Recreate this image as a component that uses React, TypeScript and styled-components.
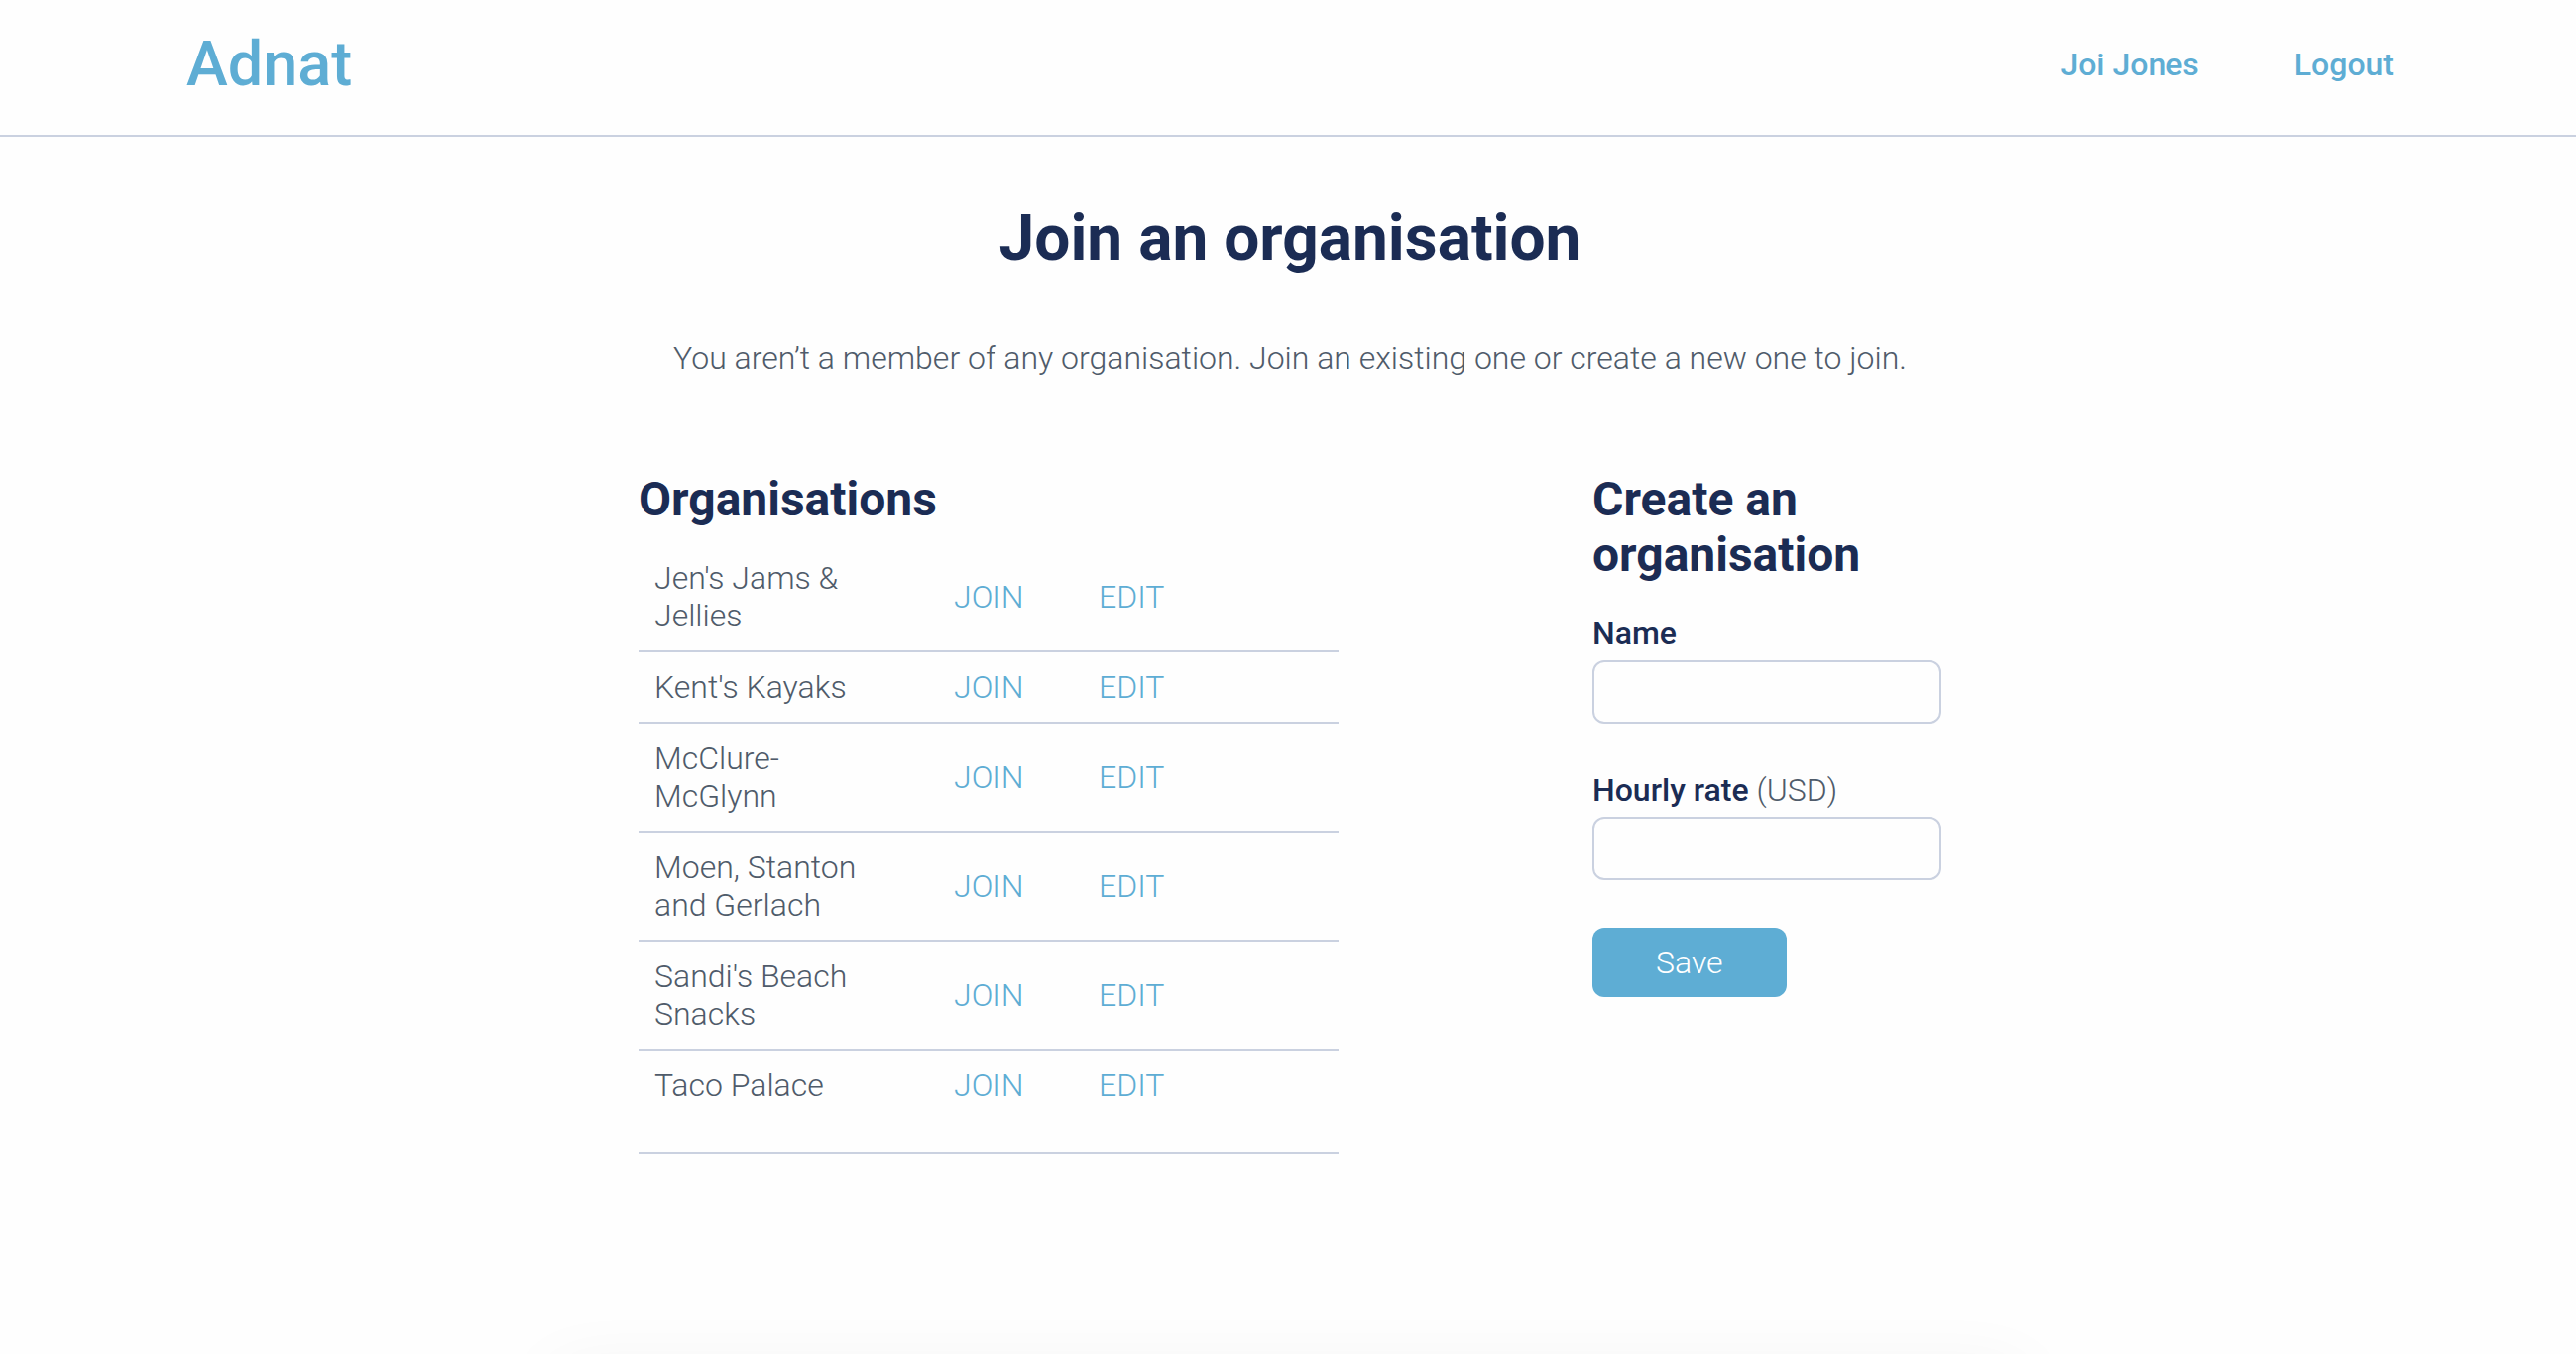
import React, { useState } from "react";
import styled, { createGlobalStyle } from "styled-components";

const colors = {
  sky: "#5eadd4",
  navy: "#1b2c54",
  text: "#4f5b6a",
  line: "#cad1e0",
  page: "#fefefe",
};

const GlobalStyle = createGlobalStyle`
  *, *::before, *::after { box-sizing: border-box; }
  body {
    margin: 0;
    background: ${colors.page};
    color: ${colors.text};
    font-family: Roboto, "Liberation Sans", sans-serif;
    font-size: 32px;
    font-weight: 300;
    line-height: 38px;
    -webkit-font-smoothing: antialiased;
  }
`;

const Page = styled.div`
  min-height: 100vh;
  overflow: hidden;
`;

const Header = styled.header`
  display: flex;
  align-items: center;
  justify-content: space-between;
  gap: 32px;
  padding: 26px 184px 32px 188px;
  border-bottom: 2px solid ${colors.line};
`;

const Brand = styled.a`
  color: ${colors.sky};
  font-size: 63px;
  font-weight: 500;
  line-height: 78px;
  text-decoration: none;
`;

const Nav = styled.nav`
  display: flex;
  gap: 96px;
`;

const NavLink = styled.a`
  color: ${colors.sky};
  font-weight: 500;
  text-decoration: none;
`;

const Main = styled.main`
  display: flex;
  flex-direction: column;
  gap: 62px;
  max-width: 1318px;
  margin: 0 auto;
  padding: 64px 0 64px 4px;
`;

const Title = styled.h1`
  margin: 0;
  color: ${colors.navy};
  font-size: 64px;
  font-weight: 700;
  line-height: 78px;
  text-align: center;
`;

const Intro = styled.p`
  margin: 0;
  text-align: center;
`;

const Columns = styled.div`
  display: grid;
  grid-template-columns: 1fr 352px;
  column-gap: 256px;
  align-items: start;
  margin-top: 34px;
`;

const Section = styled.section<{ $gap: number }>`
  display: flex;
  flex-direction: column;
  align-items: stretch;
  gap: ${(p) => p.$gap}px;
`;

const SectionTitle = styled.h2`
  margin: 0;
  color: ${colors.navy};
  font-size: 48px;
  font-weight: 700;
  line-height: 56px;
`;

const TableWrap = styled.div`
  padding-bottom: 32px;
  border-bottom: 2px solid ${colors.line};
`;

const Table = styled.table`
  width: 100%;
  border-spacing: 0;
  table-layout: fixed;
`;

const Row = styled.tr`
  &:not(:last-child) td {
    border-bottom: 2px solid ${colors.line};
  }
`;

const Cell = styled.td<{ $width?: number; $right?: number }>`
  width: ${(p) => (p.$width ? `${p.$width}px` : "auto")};
  padding: 16px ${(p) => p.$right ?? 16}px 16px 16px;
  vertical-align: middle;
`;

const ActionLink = styled.a`
  color: ${colors.sky};
  text-decoration: none;
`;

const Form = styled.form`
  display: flex;
  flex-direction: column;
  align-items: flex-start;
  gap: 48px;
`;

const Field = styled.div`
  display: flex;
  flex-direction: column;
  gap: 8px;
  width: 100%;
`;

const Label = styled.label`
  color: ${colors.navy};
  font-weight: 500;
`;

const Unit = styled.span`
  color: ${colors.text};
  font-weight: 300;
`;

const Input = styled.input`
  width: 100%;
  height: 64px;
  padding: 0 16px;
  border: 2px solid ${colors.line};
  border-radius: 12px;
  background: transparent;
  color: ${colors.text};
  font: inherit;
`;

const SaveButton = styled.button`
  padding: 16px 64px;
  border: 0;
  border-radius: 12px;
  background: ${colors.sky};
  color: #fff;
  font: inherit;
  cursor: pointer;
`;

/* Sheet docked just under the viewport; only its soft shadow is visible. */
const DockedSheet = styled.div`
  position: fixed;
  bottom: -40px;
  left: 560px;
  right: 560px;
  height: 40px;
  box-shadow: 0 24px 72px rgba(0, 0, 0, 0.08);
  pointer-events: none;
`;

const organisations = [
  "Jen's Jams & Jellies",
  "Kent's Kayaks",
  "McClure-McGlynn",
  "Moen, Stanton and Gerlach",
  "Sandi's Beach Snacks",
  "Taco Palace",
];

export default function App() {
  const [name, setName] = useState("");
  const [rate, setRate] = useState("");

  return (
    <Page>
      <GlobalStyle />
      <Header>
        <Brand href="#home">Adnat</Brand>
        <Nav>
          <NavLink href="#profile">Joi Jones</NavLink>
          <NavLink href="#logout">Logout</NavLink>
        </Nav>
      </Header>
      <Main>
        <Title>Join an organisation</Title>
        <Intro>
          You aren’t a member of any organisation. Join an existing one or create a new one to join.
        </Intro>
        <Columns>
          <Section $gap={16}>
            <SectionTitle>Organisations</SectionTitle>
            <TableWrap>
              <Table>
                <tbody>
                  {organisations.map((org) => (
                    <Row key={org}>
                      <Cell $width={302} $right={64}>{org}</Cell>
                      <Cell $width={146}>
                        <ActionLink href="#join">JOIN</ActionLink>
                      </Cell>
                      <Cell>
                        <ActionLink href="#edit">EDIT</ActionLink>
                      </Cell>
                    </Row>
                  ))}
                </tbody>
              </Table>
            </TableWrap>
          </Section>
          <Section $gap={32}>
            <SectionTitle>Create an organisation</SectionTitle>
            <Form onSubmit={(e) => e.preventDefault()}>
              <Field>
                <Label htmlFor="org-name">Name</Label>
                <Input id="org-name" value={name} onChange={(e) => setName(e.target.value)} />
              </Field>
              <Field>
                <Label htmlFor="org-rate">
                  Hourly rate <Unit>(USD)</Unit>
                </Label>
                <Input id="org-rate" value={rate} onChange={(e) => setRate(e.target.value)} />
              </Field>
              <SaveButton type="submit">Save</SaveButton>
            </Form>
          </Section>
        </Columns>
      </Main>
      <DockedSheet />
    </Page>
  );
}
